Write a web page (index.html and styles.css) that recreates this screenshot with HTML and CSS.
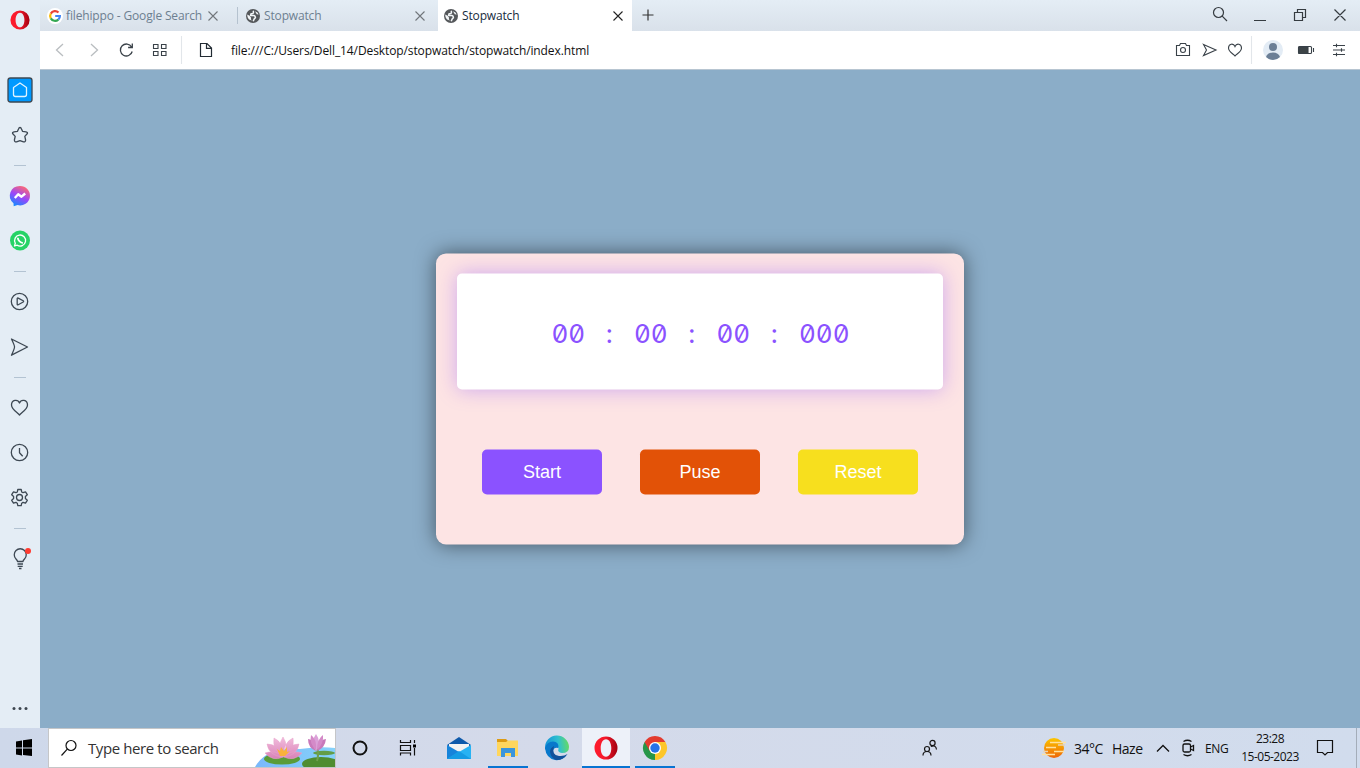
FILE: index.html
```html
<!DOCTYPE html>
<html lang="en">
<head>
<meta charset="utf-8">
<title>Stopwatch</title>
<link rel="stylesheet" href="styles.css">
</head>
<body>
<svg class="defs" width="0" height="0">
  <defs>
    <linearGradient id="red" x1="0" x2="1"><stop offset="0" stop-color="#ff1b2d"/><stop offset=".45" stop-color="#f51a2c"/><stop offset="1" stop-color="#a3000f"/></linearGradient>
    <linearGradient id="msg" x1=".2" y1="1" x2=".7" y2="0"><stop offset="0" stop-color="#0a90ff"/><stop offset=".5" stop-color="#9a46fb"/><stop offset="1" stop-color="#ff6a70"/></linearGradient>
    <linearGradient id="edge" x1="0" y1=".3" x2="1" y2=".2"><stop offset="0" stop-color="#1493d8"/><stop offset=".55" stop-color="#2fc0cf"/><stop offset="1" stop-color="#6bdc5b"/></linearGradient>
    <linearGradient id="sun" x2="0" y2="1"><stop offset="0" stop-color="#fcc600"/><stop offset="1" stop-color="#ee6508"/></linearGradient>
    <linearGradient id="pond" x2="1" y2="0"><stop offset="0" stop-color="#79b8fb"/><stop offset="1" stop-color="#86d2fa"/></linearGradient>
    <linearGradient id="petal" x2="0" y2="1"><stop offset="0" stop-color="#f2bddd"/><stop offset="1" stop-color="#d982b8"/></linearGradient>
    <symbol id="globe" viewBox="0 0 14 14"><circle cx="7" cy="7" r="7" fill="#55585b"/><path d="M7.2 1.7Q8 4 6.6 4.5L5 4.8 4.6 6.5H8Q9.5 7 9.4 8.7L8.2 10 7.2 12.3" fill="none" stroke="#f3f6f8" stroke-width="1.5"/><path d="M1.3 5.6Q3.8 6.5 5.1 8.7L4.8 10.2 6 11.6Q2 11 1.3 7zM9 2.3L10.8 5.2 12.7 5.6Q12 3.3 9 2.3" fill="#f3f6f8"/></symbol>
    <symbol id="cross" viewBox="0 0 10 10"><path d="M.5.5L9.5 9.5M9.5.5L.5 9.5"/></symbol>
    <symbol id="opera" viewBox="0 0 24 24"><path fill="url(#red)" fill-rule="evenodd" d="M12 .5a11.5 11.5 0 1 0 0 23a11.5 11.5 0 1 0 0-23zM12 3.2c3.3 0 5.3 4 5.3 8.8s-2 8.8-5.3 8.8S6.7 16.800 6.7 12S8.700 3.200 12 3.200z"/></symbol>
  </defs>
</svg>
<div class="screen">
  <aside class="sidebar">
    <div class="brand"><svg width="20" height="20"><use href="#opera"/></svg></div>
    <svg class="item" viewBox="0 0 40 45"><rect x="8" y="11" width="24" height="24" rx="2.500" fill="#0099ff"/><path d="M13.500 20.500L20 16l6.500 4.500v7q0 2-2 2h-9q-2 0-2-2z" stroke="#dff3ff" stroke-width="1.300"/></svg>
    <svg class="item" viewBox="0 0 40 45"><path d="M20 15.500Q21 15.500 21.500 17L22.500 19.300 26 19.800Q28.200 20.300 27.200 21.800L24.800 24.400 25.600 28Q25.500 30.300 23.500 29.900L20 28.600 16.500 29.900Q14.500 30.300 14.400 28L15.200 24.400 12.800 21.800Q11.800 20.300 14 19.800L17.500 19.300 18.500 17Q19 15.500 20 15.500z"/></svg>
    <i class="rule"></i>
    <svg class="item" viewBox="0 0 40 45"><path stroke="none" fill="url(#msg)" d="M20 13a10 9.700 0 1 1-2.500 19.100L13.700 33.200 13.500 30.200A10 9.700 0 0 1 20 13z"/><path d="M14.800 25L18.200 21.300 21.500 23.700 25.200 20.500" stroke="#fff" stroke-width="2.400"/></svg>
    <svg class="item" viewBox="0 0 40 45"><circle cx="20" cy="22.500" r="10" fill="#25d366" stroke="none"/><path d="M14.500 28L15.300 25.200A5.500 5.500 0 1 1 17.200 27.200z" stroke="#fff" stroke-width="1.300"/><path d="M17.800 19.800q0 2 1.800 3.600t3.300 1.500" stroke="#fff" stroke-width="1.800"/></svg>
    <i class="rule"></i>
    <svg class="item" viewBox="0 0 40 45"><circle cx="19.500" cy="22.500" r="8.200"/><path d="M17.200 19.500q0-.8 1-.4l5 2.700q.8.600 0 1.200l-5 2.700q-1 .4-1-.4z"/></svg>
    <svg class="item" viewBox="0 0 40 45"><path d="M11.500 15L27.500 23 11.500 31.200Q14.800 24 14.500 23 14.800 22 11.500 15z"/></svg>
    <i class="rule"></i>
    <svg class="item" viewBox="0 0 40 45"><path d="M19.500 18C18 14 11.500 14.500 11.500 20c0 4.500 6 7.500 8 10 2-2.500 8-5.500 8-10 0-5.500-6.500-6-8-2z"/></svg>
    <svg class="item" viewBox="0 0 40 45"><circle cx="19.500" cy="22.500" r="8.200"/><path d="M19.500 18v4.700l3.200 3.600"/></svg>
    <svg class="item" viewBox="0 0 40 45"><circle cx="19.500" cy="22.500" r="3"/><path d="M17.800 14.500h3.400l.5 2.500 1.300.7 2.500-.9 1.800 2.900-1.900 1.800v2l1.900 1.800-1.800 2.900-2.500-.8-1.300.8-.5 2.400h-3.400l-.5-2.400-1.300-.8-2.500.8-1.800-2.900 1.900-1.800v-2l-1.900-1.800 1.800-2.900 2.500.9 1.300-.7z"/></svg>
    <i class="rule"></i>
    <svg class="item" viewBox="0 0 40 45"><path d="M17.500 25.500Q17.500 24.500 16 23A6 6 0 1 1 24.500 23Q23 24.500 23 25.500zM17.500 28h5.500M17.700 30.300h5M19 32.500h2.500"/><circle cx="28" cy="15" r="3" fill="#ff3b30" stroke="none"/></svg>
    <svg class="item dots" viewBox="0 0 40 45"><g fill="#3d464f" stroke="none"><circle cx="14" cy="22.500" r="1.500"/><circle cx="20" cy="22.500" r="1.500"/><circle cx="26" cy="22.500" r="1.500"/></g></svg>
  </aside>
  <div class="browser">
    <header class="tabs">
      <div class="tab first">
        <svg width="16" height="16" viewBox="0 0 16 16"><circle cx="8" cy="8" r="8" fill="#fff"/><g fill="none" stroke-width="2.200"><path d="M11.500 4.500A4.900 4.900 0 0 0 3.800 5.600" stroke="#ea4335"/><path d="M3.800 5.600A4.900 4.900 0 0 0 3.800 10.400" stroke="#fbbc05"/><path d="M3.800 10.400A4.900 4.900 0 0 0 11.300 11.600" stroke="#34a853"/><path d="M11.300 11.600A4.900 4.900 0 0 0 12.900 8H8.200" stroke="#4285f4"/></g></svg>
        <span class="t-google">filehippo - Google Search</span><svg class="x" width="10" height="10"><use href="#cross"/></svg>
      </div>
      <div class="tab second"><svg width="14" height="14"><use href="#globe"/></svg><span>Stopwatch</span><svg class="x" width="10" height="10"><use href="#cross"/></svg></div>
      <div class="tab active"><svg width="14" height="14"><use href="#globe"/></svg><span>Stopwatch</span><svg class="x" width="10" height="10"><use href="#cross"/></svg></div>
      <svg class="plus" width="12" height="12" viewBox="0 0 12 12"><path d="M6 .5v11M.5 6h11"/></svg>
      <svg class="win" width="160" height="31" viewBox="0 0 160 31"><circle cx="18.500" cy="12.500" r="5"/><path d="M22.200 16.200L27 21M54 20.500h12M94.500 12.500h8v8h-8zM97.500 12.500v-3h8v8h-3M134.500 9.500l11 11M145.500 9.500l-11 11"/></svg>
    </header>
    <nav class="toolbar">
      <svg width="184" height="38" viewBox="0 0 184 38"><path d="M23 13l-6.500 6 6.500 6M51 13l6.500 6-6.500 6" stroke="#b9bdc0" stroke-width="1.300"/><path d="M91.600 16A6 6 0 1 0 92.200 20.500M92.300 12.500v4h-4.200" stroke-width="1.300"/><path d="M113.500 13.500h4.500v4h-4.500zM121.500 13.500h4.500v4h-4.500zM113.500 20.500h4.500v4h-4.500zM121.500 20.500h4.500v4h-4.500z"/><path d="M141.500 5v28" stroke="#e2e6ea"/><path d="M160.500 12.500h6.500l4.500 4.500v8.500h-11zM166.500 12.500v4.800h5" stroke="#222b33" stroke-width="1.200"/></svg>
      <span class="url">file:///C:/Users/Dell_14/Desktop/stopwatch/stopwatch/index.html</span>
      <svg class="actions" width="200" height="38" viewBox="0 0 200 38"><path d="M16.500 14.500h3l1-2h5l1 2h3v10h-13z"/><circle cx="23" cy="19" r="2.500"/><path d="M43.500 13.500L56 19 43.500 24.500 46.500 19z"/><path d="M75 15.500C73.500 11.800 68.500 12.500 68.500 17c0 4 5 6 6.500 8 1.500-2 6.500-4 6.500-8 0-4.500-5-5.200-6.500-1.500z"/><path d="M91.500 5v28" stroke="#e2e6ea"/><circle cx="113" cy="19" r="10" fill="#e3ecf5" stroke="none"/><circle cx="113" cy="16" r="4" fill="#6b7f96" stroke="none"/><path d="M106 26q1.500-4.500 7-4.500t7 4.500q-3 3-7 3t-7-3z" fill="#6b7f96" stroke="none"/><rect x="138.500" y="15.500" width="13" height="7" rx="1"/><path d="M139 16h9v6.500h-9z" fill="#3d4447"/><path d="M153.500 17v4"/><path d="M173 14.500h12M173 19h12M173 23.500h12M176.500 12.700v3.600M181.500 17.200v3.600M176.500 21.700v3.600"/></svg>
    </nav>
    <main class="page">
      <section class="card">
        <div class="display"><span class="two">00</span><span>:</span><span class="two">00</span><span>:</span><span class="two">00</span><span>:</span><span class="three">000</span></div>
        <div class="buttons"><button class="start">Start</button><button class="pause">Puse</button><button class="reset">Reset</button></div>
      </section>
    </main>
  </div>
  <footer class="taskbar">
    <svg width="48" height="40" viewBox="0 0 48 40"><path d="M16 13.500l6-1v7h-6zM23 12.300l9-1.300v8.500h-9zM16 20.500h6v7l-6-1zM23 20.500h9V28l-9-1z"/></svg>
    <div class="search">
      <svg width="18" height="18" viewBox="0 0 18 18"><circle cx="11" cy="6.500" r="5" fill="none" stroke="#111" stroke-width="1.200"/><path d="M7.300 10.200L1.500 16.500" stroke="#111" stroke-width="1.200"/></svg>
      <span>Type here to search</span>
      <svg class="lotus" width="80" height="38" viewBox="0 0 80 38"><path d="M0 38Q11 18 45 20 65 17 80 19V38z" fill="url(#pond)"/><ellipse cx="27" cy="30" rx="18" ry="5.500" fill="#5a9c38"/><ellipse cx="66" cy="35" rx="19" ry="7" fill="#4f8d31"/><ellipse cx="69" cy="24" rx="11" ry="2.200" fill="#639d47"/><path d="M62 18q2 8 0 14" stroke="#6fa04e" stroke-width="2" fill="none"/><g fill="url(#petal)" stroke="#e9a3cb" stroke-width=".5"><path d="M28 8q6 9 0 19q-6-10 0-19zM19 9q9 4 10 18Q17 22 19 9zM38 9q-9 4-10 18Q40 22 38 9zM12 15q11 0 16 13Q14 27 12 15zM44 15q-11 0-16 13Q42 27 44 15zM10 24q11-4 18 4-10 5-18-4zM47 24q-11-4-18 4 10 5 18-4z"/></g><path d="M22 20l3 2 1-4 3 4 3-4v5l3-1-5 5h-5z" fill="#f9b13c"/><g><path d="M53 10q7 0 8 12-8-3-8-12zM71 10q-7 0-9 12 8-3 9-12z" fill="#c879ba"/><path d="M61 5q6 8 0 17-6-9 0-17z" fill="#dba0d8"/><path d="M56 6q6 4 5 15-7-6-5-15zM68 6q-6 4-6 15 7-6 6-15z" fill="#d48ac8"/></g></svg>
    </div>
    <svg width="48" height="40" viewBox="0 0 48 40"><circle cx="24" cy="20" r="6.500" fill="none" stroke="#111" stroke-width="2"/></svg>
    <svg width="48" height="40" viewBox="0 0 48 40"><path d="M16.500 12v2.500h10V12M16.500 27.500V25h10v2.500M16.500 17.500h10v5h-10zM30.500 12v3M30.500 20v7.500" fill="none" stroke="#111" stroke-width="1.200"/><path d="M29 16.500h3v3h-3z"/></svg>
    <div class="apps">
      <svg width="48" height="40" viewBox="0 0 48 40"><path d="M12 17L24 9l12 8-12 8z" fill="#0e5aab"/><path d="M14 16h20v7l-10 4-10-4z" fill="#f3f3f3"/><path d="M12 17v14h24z" fill="#1683da"/><path d="M36 17v14H12z" fill="#27b2f3"/><path d="M12 31L24 23l12 8z" fill="#159be4"/></svg>
      <svg class="open" width="48" height="40" viewBox="0 0 48 40"><path d="M13 11h9l2 2v4H13z" fill="#dd9b13"/><path d="M13 14h9l2-1.500h10V28H13z" fill="#ffd65d"/><path d="M17 29v-9h14v9h-4v-4h-6v4z" fill="#3b95dc"/></svg>
      <svg width="48" height="40" viewBox="0 0 48 40"><path d="M12 20A12 12 0 0 1 36 19Q36 25 29 25 24 24 25.500 21 26 17 21 17 15 17 12 22z" fill="url(#edge)"/><path d="M12 20Q14 13.500 20 13.500T25.500 20Q21 18.500 20 23 20.500 29 27 30 31 30 34.500 26.500 29 33 22 32 13 30 12 20z" fill="#0878cb"/><path d="M17 24Q17 20 21 18 18 27 26 28 31 28.500 34.500 26 30 32.500 23 32 18 30 17 24z" fill="#11519b"/></svg>
      <svg class="open current" width="48" height="40" viewBox="0 0 48 40"><use href="#opera" x="12" y="8" width="24" height="24"/></svg>
      <svg class="open" width="48" height="40" viewBox="0 0 48 40"><path d="M24 20L13.600 14A12 12 0 0 1 34.400 14z" fill="#e33b2e"/><path d="M24 20L34.400 14A12 12 0 0 1 24 32z" fill="#fdc629"/><path d="M24 20V32A12 12 0 0 1 13.600 14z" fill="#269548"/><path d="M24 14h10.400L29.200 23 24 32z" fill="#fdc629"/><path d="M18.800 23L13.600 14 24 14z" fill="#e33b2e"/><circle cx="24" cy="20" r="6" fill="#fff"/><circle cx="24" cy="20" r="4.700" fill="#2673e8"/></svg>
    </div>
    <svg class="people" width="20" height="20" viewBox="0 0 20 20"><g fill="none" stroke="#151515" stroke-width="1.200"><circle cx="8" cy="11" r="2.500"/><path d="M4 17.500q0-4 4-4t4 4"/><circle cx="13.500" cy="5" r="2.600"/><path d="M11.800 8.500Q17 6.500 17.500 11.500"/></g></svg>
    <svg class="haze" width="24" height="24" viewBox="0 0 24 24"><circle cx="12" cy="12" r="10" fill="url(#sun)"/><path d="M8 6.500h16M4 11.500h10M12 15.500h10M0 18.500h13" stroke="#ffe1a0" stroke-width="1.600"/><path d="M16 9h7M1 15.500h5" stroke="#e9d4b5" stroke-width="1.500"/></svg>
    <span class="weather">34°C</span><span class="sky">Haze</span>
    <svg width="50" height="40" viewBox="0 0 50 40"><g fill="none" stroke="#111" stroke-width="1.300"><path d="M12 23.500l6-6 6 6"/><rect x="38" y="16" width="7.500" height="8" rx="1.500"/><path d="M45.500 19l3-1.500v5l-3-1.500M38.500 13.500q4-2.500 8 0M38.500 26.500q4 2.500 8 0"/></g></svg>
    <span class="lang">ENG</span>
    <div class="clock"><span>23:28</span><span class="date">15-05-2023</span></div>
    <svg class="notice" width="18" height="18" viewBox="0 0 18 18"><path d="M1.500 1.500h15v12h-5L9 16l-2.500-2.500h-5z" fill="none" stroke="#111" stroke-width="1.200"/></svg>
    <i class="peek"></i>
  </footer>
</div>
</body>
</html>
```
FILE: styles.css
```css
* { box-sizing: border-box; }
body { margin: 0; font-family: "Open Sans", "Noto Sans", sans-serif; font-size: 12px; color: #111; overflow: hidden; }
.defs { display: block; }
svg { flex: none; display: block; }
.screen { display: grid; grid-template: 728px 40px / 40px 1320px; width: 1360px; height: 768px; }

.sidebar { background: #e4edf5; display: flex; flex-direction: column; }
.brand { height: 67px; flex: none; padding: 10px; }
.item { width: 40px; height: 45px; fill: none; stroke: #3d4853; stroke-width: 1.3; stroke-linejoin: round; }
.rule { height: 16px; flex: none; display: flex; align-items: center; justify-content: center; }
.rule::after { content: ""; width: 12px; height: 1px; background: #b3c3d2; }
.dots { margin-top: auto; margin-bottom: -3px; }

.browser { display: grid; grid-template-rows: 31px 39px 658px; }
.tabs { display: flex; align-items: stretch; background: linear-gradient(#e4edf5, #d9e1ea); }
.tab { display: flex; align-items: center; color: #6d7f90; letter-spacing: -.15px; white-space: nowrap; }
.tab span { margin-left: 4px; }
.tab .x { margin-left: auto; stroke: #71767b; stroke-width: 1.1; fill: none; }
.first { width: 198px; padding: 0 20px 0 7px; position: relative; }
.first span { margin-left: 3px; }
.first::after { content: ""; position: absolute; right: 0; top: 7px; width: 1px; height: 17px; background: #b5c2cf; }
.second { width: 200px; padding: 0 13px 0 8px; }
.active { width: 194px; padding: 0 9px 0 6px; background: #fff; color: #182c40; }
.active .x { stroke: #222; }
.plus { margin: 9px 0 0 10px; stroke: #333; stroke-width: 1.2; }
.win { margin-left: auto; margin-right: 0; fill: none; stroke: #353b40; stroke-width: 1.2; }
.win { width: 160px; margin-right: 0; }

.toolbar { display: flex; align-items: center; background: #fff; border-bottom: 1px solid #b7c5d1; }
.toolbar svg { fill: none; stroke: #394148; stroke-width: 1.1; }
.url { margin-left: 7px; color: #111; letter-spacing: -.1px; white-space: nowrap; }
.actions { margin-left: auto; }

.page { background: #8badc8; display: flex; align-items: center; justify-content: center; }
.card { width: 528px; height: 291px; padding: 20px 21px; border-radius: 10px; background: #fde4e4; box-shadow: 0 0 20px rgba(0, 0, 0, .5); transform: translateY(-.5px); margin-top: 1px; }
.display { height: 116px; border-radius: 5px; background: #fff; box-shadow: 0 0 20px rgba(139, 82, 255, .4); display: flex; align-items: center; justify-content: center; gap: 16.5px; padding-top: 3px; color: #8b52ff; font-family: Inter, sans-serif; font-size: 26px; font-feature-settings: "zero", "tnum"; }
.display span { width: 16.5px; text-align: center; }
.display .two { width: 33px; }
.display .three { width: 49.5px; }
.buttons { display: flex; justify-content: space-between; padding: 60px 25px 0; }
.buttons button { width: 120px; height: 45px; padding: 0; border: 0; border-radius: 5px; color: #fff; font: 18px "Liberation Sans", sans-serif; }
.start { background: #8b52ff; }
.pause { background: #e25207; }
.reset { background: #f7df1e; }

.taskbar { grid-column: 1 / 3; display: flex; align-items: center; background: linear-gradient(90deg, #ced8ea, #d4daea 40%, #d1dced); white-space: nowrap; }
.search { width: 288px; height: 40px; display: flex; align-items: center; background: #fff; border: 1px solid #c5c6c8; padding-left: 11px; font-size: 15px; letter-spacing: -.4px; color: #333; }
.search span { margin-left: 10px; }
.lotus { margin-left: auto; }
.apps { display: flex; gap: 1px; margin-left: 3px; }
.open { background: linear-gradient(#0874d2, #0874d2) 50% 100% / 40px 2px no-repeat; }
.current { background: linear-gradient(#0874d2, #0874d2) 50% 100% / 48px 2px no-repeat, #edf1f9; }
.people { margin-left: 240px; }
.haze { margin-left: 103px; }
.weather, .sky { font-size: 14px; letter-spacing: -.5px; }
.weather { width: 38px; margin-left: 8px; }
.sky { width: 34px; }
.lang { width: 25px; margin-left: 10px; letter-spacing: -.4px; }
.taskbar .sky + svg { margin-left: -1px; }
.clock { width: 70px; margin-left: 5px; display: flex; flex-direction: column; align-items: center; line-height: 18px; letter-spacing: -.5px; }
.notice { margin-left: 11px; }
.peek { margin-left: auto; margin-right: 3px; width: 1px; height: 40px; background: #a4adb9; }
```
